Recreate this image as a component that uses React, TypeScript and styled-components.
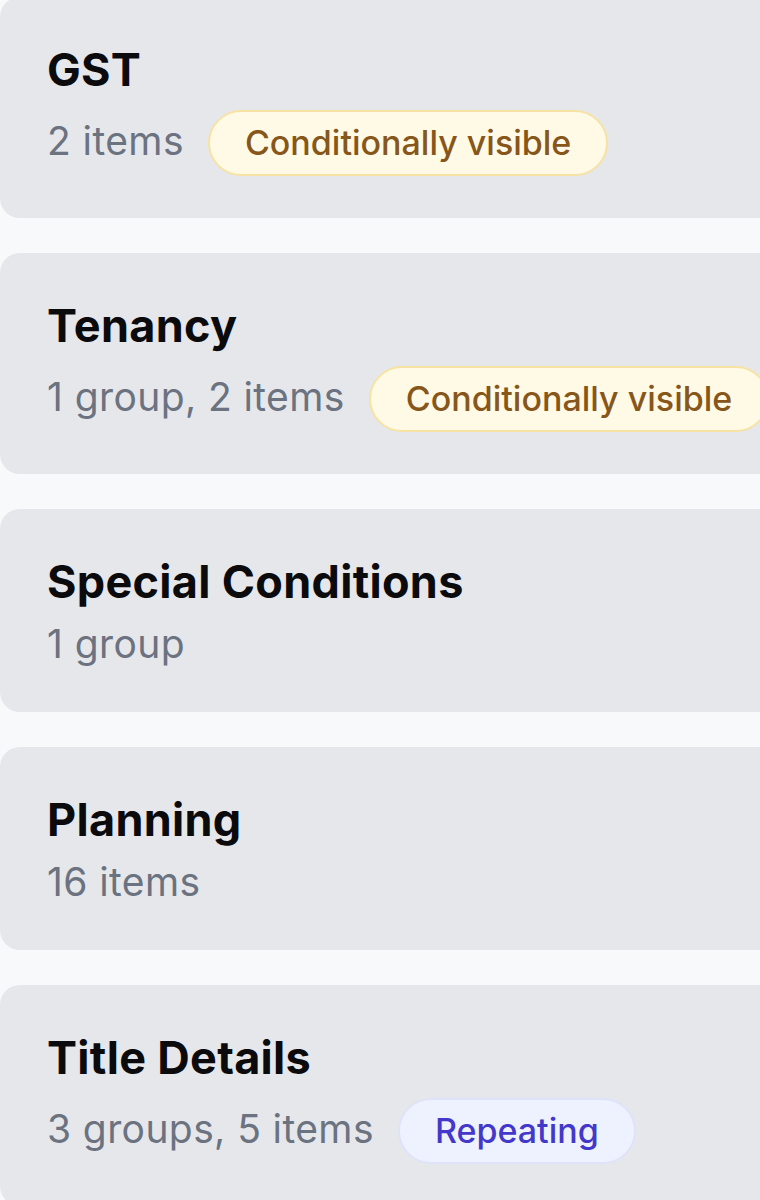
import React from 'react';
import styled, { createGlobalStyle } from 'styled-components';

type BadgeKind = 'conditional' | 'repeating';

interface Section {
  title: string;
  meta: string;
  badge?: { kind: BadgeKind; label: string };
}

const sections: Section[] = [
  { title: 'GST', meta: '2 items', badge: { kind: 'conditional', label: 'Conditionally visible' } },
  {
    title: 'Tenancy',
    meta: '1 group, 2 items',
    badge: { kind: 'conditional', label: 'Conditionally visible' },
  },
  { title: 'Special Conditions', meta: '1 group' },
  { title: 'Planning', meta: '16 items' },
  { title: 'Title Details', meta: '3 groups, 5 items', badge: { kind: 'repeating', label: 'Repeating' } },
];

const GlobalStyle = createGlobalStyle`
  html, body {
    margin: 0;
    padding: 0;
    background: #f8f9fb;
    overflow: hidden;
  }

  body {
    font-family: Inter, "Noto Sans", "Liberation Sans", sans-serif;
    -webkit-font-smoothing: antialiased;
  }
`;

const App: React.FC = () => {
  return (
    <>
      <GlobalStyle />
      <List>
        {sections.map((s) => (
          <Card key={s.title}>
            <Title>{s.title}</Title>
            <Meta>
              <Count>{s.meta}</Count>
              {s.badge && <Badge $kind={s.badge.kind}>{s.badge.label}</Badge>}
            </Meta>
          </Card>
        ))}
      </List>
    </>
  );
};

export default App;

const List = styled.div`
  display: flex;
  flex-direction: column;
  gap: 35px;
  margin-top: -3px;
  margin-right: -60px;
`;

const Card = styled.div`
  background: #e6e7eb;
  border-radius: 20px;
  padding: 39px 47px 40px;
`;

const Title = styled.div`
  font-size: 45px;
  line-height: 67px;
  font-weight: 700;
  color: #0b0b0d;
  letter-spacing: 0.3px;
`;

const Meta = styled.div`
  display: flex;
  align-items: baseline;
  gap: 24px;
`;

const Count = styled.span`
  font-size: 39px;
  line-height: 57px;
  color: #6b7280;
  letter-spacing: 0.4px;
  white-space: nowrap;
`;

const badgeColors: Record<BadgeKind, { bg: string; border: string; text: string }> = {
  conditional: { bg: '#fefae6', border: '#f6e3a4', text: '#87561a' },
  repeating: { bg: '#eef1fe', border: '#dfe3fa', text: '#4338ca' },
};

const Badge = styled.span<{ $kind: BadgeKind }>`
  display: inline-block;
  margin: 7px 0 2px;
  padding: 7px 35px;
  border-radius: 999px;
  border: 2px solid ${(p) => badgeColors[p.$kind].border};
  background: ${(p) => badgeColors[p.$kind].bg};
  color: ${(p) => badgeColors[p.$kind].text};
  font-size: 34px;
  line-height: 48px;
  font-weight: 500;
  white-space: nowrap;
`;
